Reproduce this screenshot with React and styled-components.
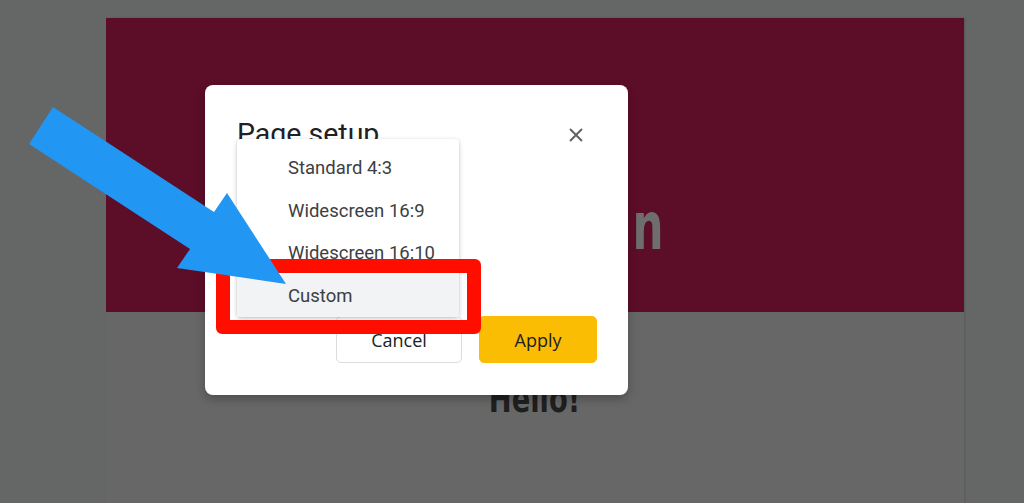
import React from "react";
import styled, { createGlobalStyle } from "styled-components";

const GlobalStyle = createGlobalStyle`
  html, body { margin: 0; padding: 0; }
  body {
    background: #656766;
    overflow: hidden;
    font-family: Roboto, "Noto Sans", sans-serif;
  }
`;

const Stage = styled.div`
  position: relative;
  width: 1024px;
  height: 503px;
  overflow: hidden;
  padding: 18px 0 0 106px;
  box-sizing: border-box;
`;

const Slide = styled.div`
  width: 858px;
  height: 500px;
  display: flex;
  flex-direction: column;
  box-shadow: 1px 0 2px rgba(0, 0, 0, 0.15);
`;

const SlideTop = styled.div`
  height: 294px;
  background: #5c0d27;
  display: flex;
  justify-content: center;
  align-items: flex-start;
  padding-top: 176px;
  box-sizing: border-box;
  overflow: hidden;
`;

const SlideTitle = styled.div`
  font-family: "DejaVu Sans", sans-serif;
  font-weight: 700;
  font-size: 66px;
  line-height: 1;
  color: #6d6e6d;
  letter-spacing: 6px;
  white-space: nowrap;
  margin-right: 99px;
  transform: scaleX(0.66);
`;

const SlideBottom = styled.div`
  flex: 1;
  background: #676767;
  display: flex;
  justify-content: center;
  align-items: flex-start;
  padding-top: 68px;
`;

const SlideText = styled.div`
  font-family: "DejaVu Sans", sans-serif;
  font-weight: 700;
  font-size: 38px;
  line-height: 1;
  color: #1f1f1f;
  white-space: nowrap;
  transform: scaleX(0.72);
`;

const Dialog = styled.div`
  position: absolute;
  left: 205px;
  top: 85px;
  width: 423px;
  height: 310px;
  background: #fff;
  border-radius: 8px;
  box-shadow: 0 4px 10px rgba(0, 0, 0, 0.25);
  box-sizing: border-box;
  padding: 32px 31px 32px 32px;
  display: flex;
  flex-direction: column;
  justify-content: space-between;
`;

const DialogHeader = styled.div`
  display: flex;
  justify-content: space-between;
  align-items: flex-start;
`;

const DialogTitle = styled.h2`
  margin: 0;
  font-family: Roboto, sans-serif;
  font-weight: 400;
  font-size: 28.5px;
  line-height: 34px;
  color: #202124;
`;

const CloseButton = styled.button`
  border: 0;
  background: none;
  padding: 0;
  margin: 10px 13px 0 0;
  width: 16px;
  height: 16px;
  display: flex;
`;

const Actions = styled.div`
  display: flex;
  justify-content: flex-end;
  gap: 17px;
`;

const Button = styled.button`
  height: 47px;
  width: ${(p) => (p.$primary ? "118px" : "126px")};
  border-radius: 5px;
  border: 1px solid ${(p) => (p.$primary ? "#fbbc04" : "#dadce0")};
  background: ${(p) => (p.$primary ? "#fbbc04" : "#fff")};
  color: #202124;
  font-family: "Open Sans", sans-serif;
  font-size: 18px;
  font-weight: 500;
  padding: 0;
`;

const Menu = styled.ul`
  position: absolute;
  left: 32px;
  top: 54px;
  width: 222px;
  margin: 0;
  padding: 8px 0 0;
  list-style: none;
  background: #fff;
  border-radius: 4px;
  box-shadow: 0 1px 3px rgba(60, 64, 67, 0.25), 0 2px 6px rgba(60, 64, 67, 0.12);
`;

const MenuItem = styled.li`
  height: 42.5px;
  display: flex;
  align-items: center;
  padding-left: 51px;
  font-family: Roboto, sans-serif;
  font-size: 18.5px;
  color: #3c4043;
  background: ${(p) => (p.$active ? "#f1f3f4" : "transparent")};
`;

const Highlight = styled.div`
  position: absolute;
  left: 216px;
  top: 259px;
  width: 265px;
  height: 75px;
  border: 14px solid #ff0e00;
  border-radius: 6px;
  box-sizing: border-box;
`;

const ArrowLayer = styled.svg`
  position: absolute;
  left: 0;
  top: 0;
  width: 1024px;
  height: 503px;
  pointer-events: none;
`;

export default function App() {
  return (
    <>
      <GlobalStyle />
      <Stage>
        <Slide>
          <SlideTop>
            <SlideTitle>Presentation</SlideTitle>
          </SlideTop>
          <SlideBottom>
            <SlideText>Hello!</SlideText>
          </SlideBottom>
        </Slide>

        <Dialog>
          <DialogHeader>
            <DialogTitle>Page setup</DialogTitle>
            <CloseButton aria-label="Close">
              <svg width="16" height="16" viewBox="0 0 16 16">
                <path d="M2 2 L14 14 M14 2 L2 14" stroke="#5f6368" strokeWidth="2" />
              </svg>
            </CloseButton>
          </DialogHeader>
          <Actions>
            <Button>Cancel</Button>
            <Button $primary>Apply</Button>
          </Actions>
          <Menu>
            <MenuItem>Standard 4:3</MenuItem>
            <MenuItem>Widescreen 16:9</MenuItem>
            <MenuItem>Widescreen 16:10</MenuItem>
            <MenuItem $active>Custom</MenuItem>
          </Menu>
        </Dialog>

        <Highlight />

        <ArrowLayer viewBox="0 0 1024 503">
          <polygon
            points="53,107 214,212 227,193 286,284 177,268 190,249 29,144"
            fill="#2196f3"
          />
        </ArrowLayer>
      </Stage>
    </>
  );
}
